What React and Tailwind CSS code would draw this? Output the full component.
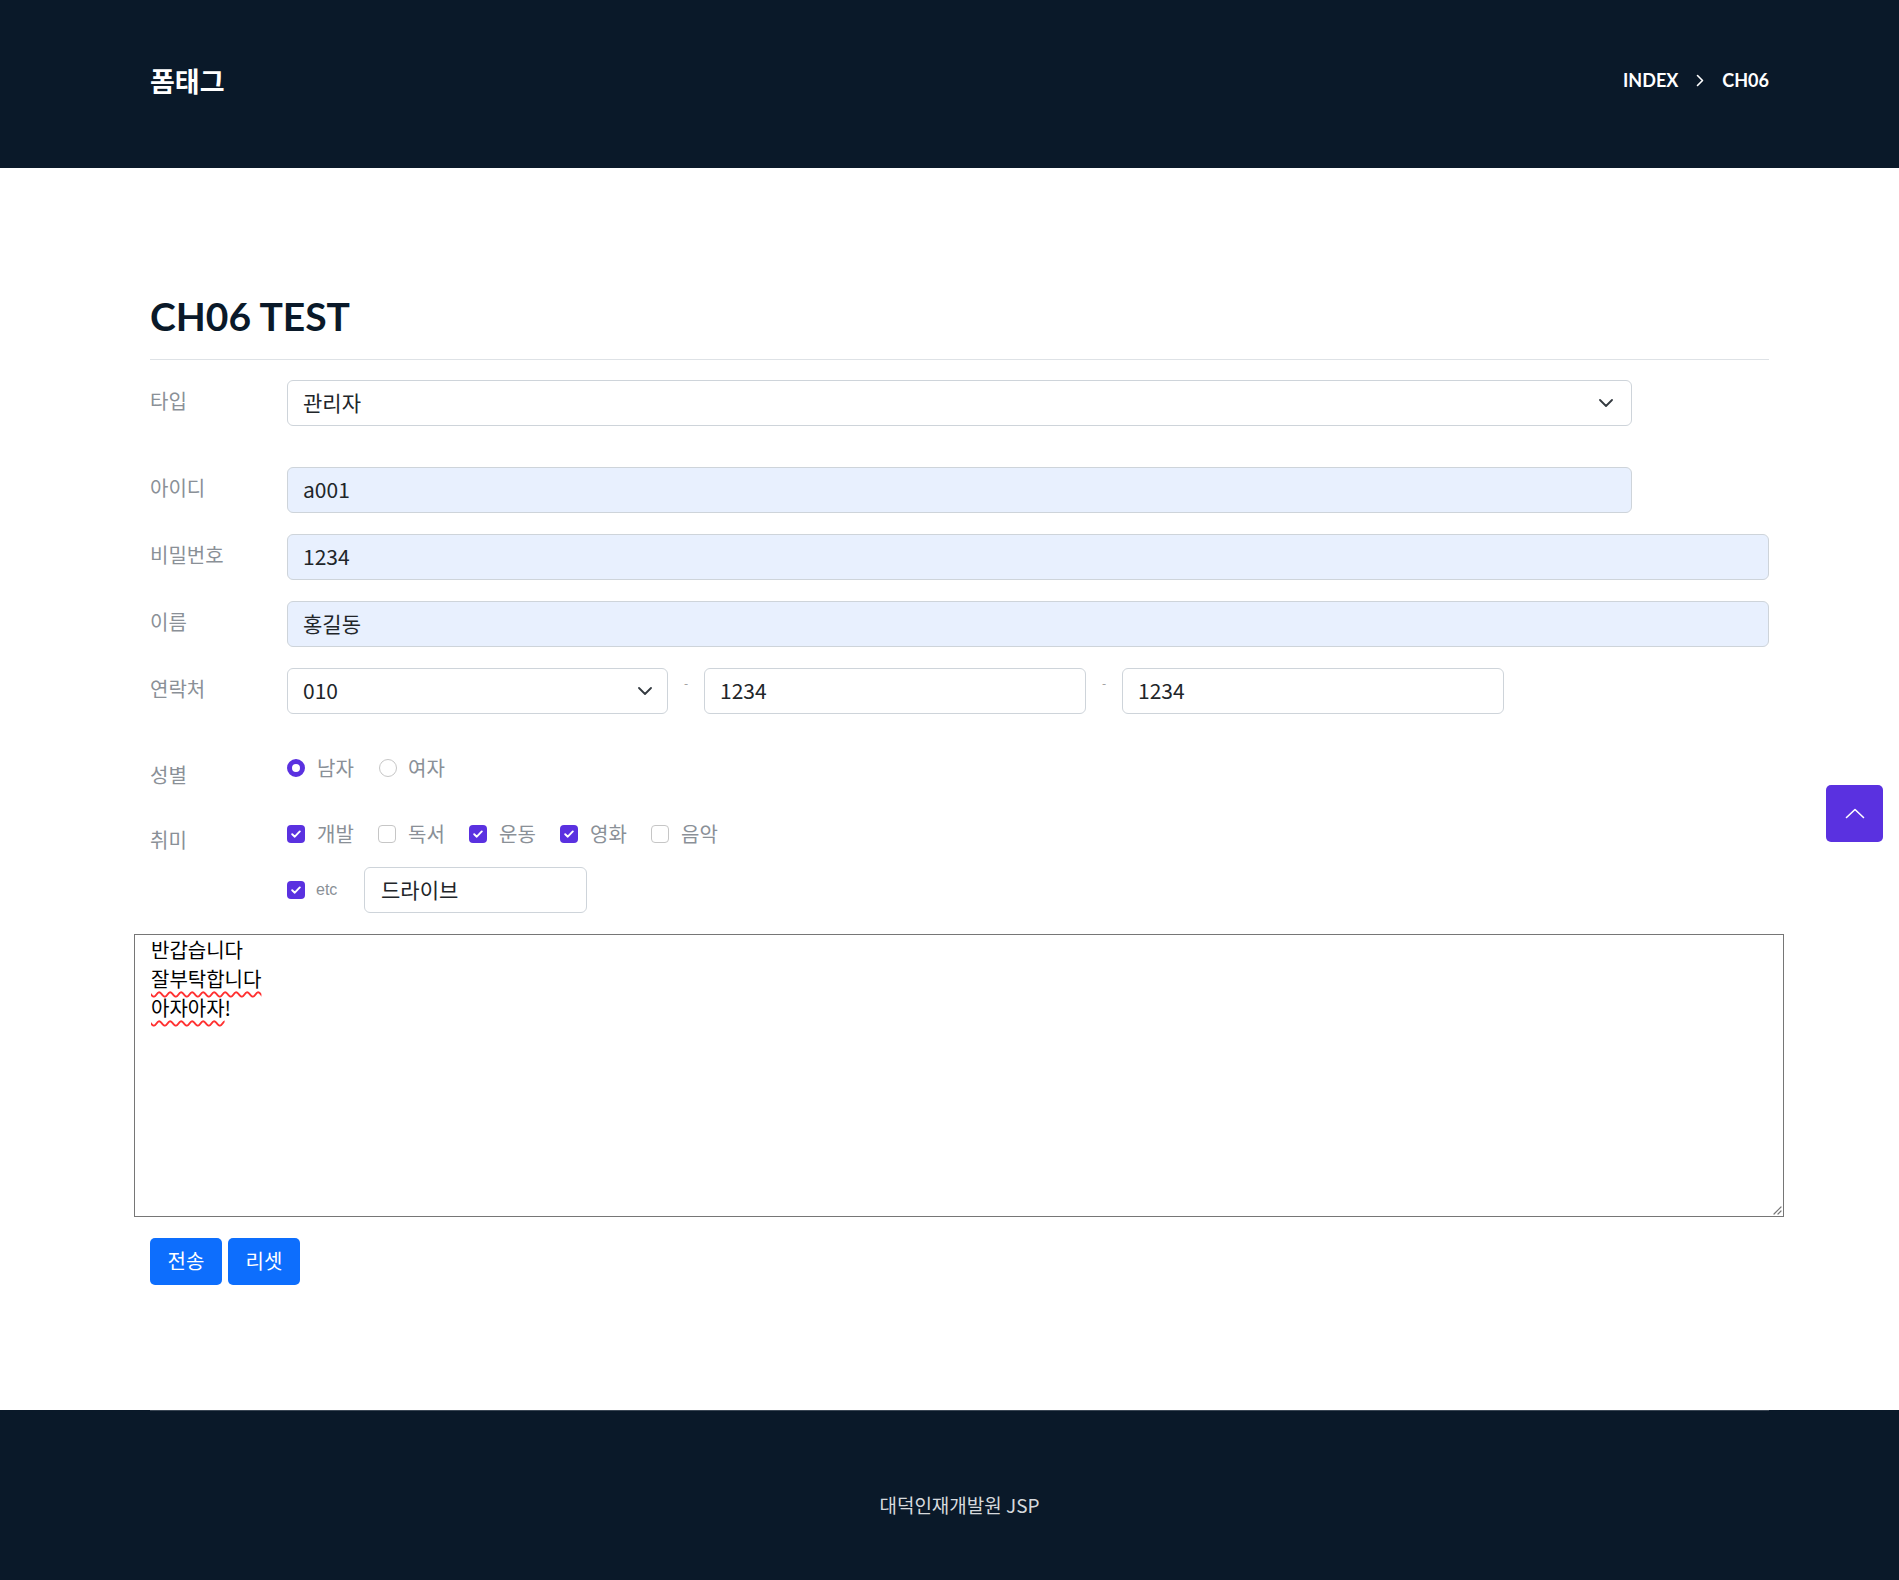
import React from "react";

const KO = "font-['Noto_Sans_CJK_KR','Noto_Sans',sans-serif]";
const LATO = "font-['Lato','Noto_Sans_CJK_KR',sans-serif]";

function Chevron({ color = "#343a40" }) {
  return (
    <svg width="14" height="8" viewBox="0 0 14 8" fill="none">
      <path d="M1 1l6 6 6-6" stroke={color} strokeWidth="1.8" strokeLinecap="round" strokeLinejoin="round" />
    </svg>
  );
}

function Check({ checked }) {
  if (checked) {
    return (
      <span className="w-[18px] h-[18px] rounded-[4px] bg-[#5a31e0] flex items-center justify-center shrink-0">
        <svg width="10" height="8" viewBox="0 0 10 8" fill="none">
          <path d="M1.2 4.2l2.6 2.5L8.8 1.4" stroke="white" strokeWidth="1.9" strokeLinecap="round" strokeLinejoin="round" />
        </svg>
      </span>
    );
  }
  return <span className="w-[18px] h-[18px] rounded-[4px] border border-[#c6c6c6] bg-white shrink-0" />;
}

function Radio({ checked }) {
  if (checked) {
    return <span className="w-[18px] h-[18px] rounded-full border-[5px] border-[#5a31e0] bg-white shrink-0" />;
  }
  return <span className="w-[18px] h-[18px] rounded-full border border-[#c6c6c6] bg-white shrink-0" />;
}

function Label({ children, className = "" }) {
  return (
    <div className={`w-[137px] shrink-0 text-[20px] leading-[28px] text-[#8a9097] ${className}`}>{children}</div>
  );
}

function Field({ value, width, filled }) {
  return (
    <div
      className={`${width} h-[46px] border border-[#ced4da] rounded-[6px] flex items-center pl-[15px] text-[21px] text-[#212529] ${
        filled ? "bg-[#e8f0fe]" : "bg-white"
      }`}
    >
      {value}
    </div>
  );
}

function Select({ value, width, pr }) {
  return (
    <div
      className={`${width} h-[46px] border border-[#ced4da] rounded-[6px] flex items-center justify-between pl-[15px] ${pr} text-[21px] text-[#212529] bg-white`}
    >
      <span>{value}</span>
      <Chevron />
    </div>
  );
}

function Dash() {
  return (
    <div className="w-[36px] shrink-0 self-start pt-[8px] text-center text-[12px] leading-[14px] text-[#9a9a9a]">-</div>
  );
}

export default function App() {
  const hobbies = [
    ["개발", true],
    ["독서", false],
    ["운동", true],
    ["영화", true],
    ["음악", false],
  ];
  return (
    <div className={`relative w-[1899px] min-h-[1580px] bg-white ${KO}`}>
      {/* Header */}
      <header className="h-[168px] bg-[#0a1929] flex items-center justify-between pl-[150px] pr-[130px] pb-[8px]">
        <div className="text-white text-[27px] font-bold leading-none">폼태그</div>
        <nav className={`flex items-center text-white text-[18px] font-bold ${LATO}`}>
          <span>INDEX</span>
          <span className="mx-[18px] flex items-center">
            <svg width="8" height="13" viewBox="0 0 8 13" fill="none">
              <path d="M1.5 1.5l5 5-5 5" stroke="white" strokeWidth="1.6" strokeLinecap="round" strokeLinejoin="round" />
            </svg>
          </span>
          <span>CH06</span>
        </nav>
      </header>

      {/* Main */}
      <main className="pl-[150px] pt-[125px] pb-[125px]">
        <div className="w-[1619px]">
          <h2 className={`text-[39px] leading-[1.2] font-bold text-[#0a1929] pb-[19px] border-b border-[#dee2e6] ${LATO}`}>
            CH06 TEST
          </h2>

          <div className="flex items-center mt-[20px]">
            <Label className="-mt-[4px]">타입</Label>
            <Select value="관리자" width="w-[1345px]" pr="pr-[18px]" />
          </div>

          <div className="flex items-center mt-[41px]">
            <Label className="-mt-[4px]">아이디</Label>
            <Field value="a001" width="w-[1345px]" filled />
          </div>

          <div className="flex items-center mt-[21px]">
            <Label className="-mt-[4px]">비밀번호</Label>
            <Field value="1234" width="w-[1482px]" filled />
          </div>

          <div className="flex items-center mt-[21px]">
            <Label className="-mt-[4px]">이름</Label>
            <Field value="홍길동" width="w-[1482px]" filled />
          </div>

          <div className="flex items-center mt-[21px]">
            <Label className="-mt-[4px]">연락처</Label>
            <Select value="010" width="w-[381px]" pr="pr-[15px]" />
            <Dash />
            <Field value="1234" width="w-[382px]" />
            <Dash />
            <Field value="1234" width="w-[382px]" />
          </div>

          {/* 성별 */}
          <div className="flex items-start mt-[41px]">
            <Label className="pt-[6px]">성별</Label>
            <div className="flex items-center h-[26px] text-[20px] text-[#8a9097]">
              <div className="flex items-center w-[92px]">
                <Radio checked />
                <span className="ml-[12px]">남자</span>
              </div>
              <div className="flex items-center">
                <Radio />
                <span className="ml-[11px]">여자</span>
              </div>
            </div>
          </div>

          {/* 취미 */}
          <div className="flex items-start mt-[31px]">
            <Label className="pt-[6px]">취미</Label>
            <div className="flex flex-col">
              <div className="flex items-center h-[28px] text-[20px] text-[#8a9097]">
                {hobbies.map(([name, on]) => (
                  <div key={name} className="flex items-center w-[91px]">
                    <Check checked={on} />
                    <span className="ml-[12px]">{name}</span>
                  </div>
                ))}
              </div>
              <div className="flex items-center mt-[19px]">
                <Check checked />
                <span className="ml-[11px] w-[48px] text-[16px] text-[#8a9097] font-['Liberation_Sans',sans-serif]">etc</span>
                <div className="w-[223px] h-[46px] border border-[#ced4da] rounded-[6px] flex items-center pl-[16px] text-[21px] text-[#212529]">
                  드라이브
                </div>
              </div>
            </div>
          </div>

          {/* Textarea */}
          <div className="relative mt-[21px] -ml-[16px] w-[1650px] h-[283px] border border-[#767676] pl-[16px] text-[20px] leading-[29px] text-black">
            <div>반갑습니다</div>
            <div>
              <span className="underline decoration-wavy decoration-[#ff3030] decoration-[1.5px] underline-offset-[4px]">잘부탁합니다</span>
            </div>
            <div>
              <span className="underline decoration-wavy decoration-[#ff3030] decoration-[1.5px] underline-offset-[4px]">아자아자</span>!
            </div>
            <svg className="absolute right-[1px] bottom-[1px]" width="10" height="10" viewBox="0 0 10 10" fill="none">
              <path d="M9 2L2 9M9 6L6 9" stroke="#767676" strokeWidth="1.2" strokeLinecap="round" />
            </svg>
          </div>

          {/* Buttons */}
          <div className="flex gap-[6px] mt-[21px]">
            <button className="w-[72px] h-[47px] rounded-[5px] bg-[#0d6efd] text-white text-[20px]">전송</button>
            <button className="w-[72px] h-[47px] rounded-[5px] bg-[#0d6efd] text-white text-[20px]">리셋</button>
          </div>
        </div>
      </main>

      {/* Footer */}
      <footer className="bg-[#0a1929] h-[171px]">
        <div className="ml-[150px] w-[1619px] h-full border-t border-[#3a4654] flex justify-center pt-[80px]">
          <span className="text-[19px] leading-[27px] text-[#d6d9dd]">대덕인재개발원 JSP</span>
        </div>
      </footer>

      {/* Scroll to top */}
      <button className="absolute right-[16px] top-[785px] w-[57px] h-[57px] rounded-[5px] bg-[#5a31e0] flex items-center justify-center">
        <svg width="20" height="11" viewBox="0 0 20 11" fill="none">
          <path d="M1.5 9.5L10 1.5l8.5 8" stroke="white" strokeWidth="1.6" strokeLinecap="round" strokeLinejoin="round" />
        </svg>
      </button>
    </div>
  );
}
